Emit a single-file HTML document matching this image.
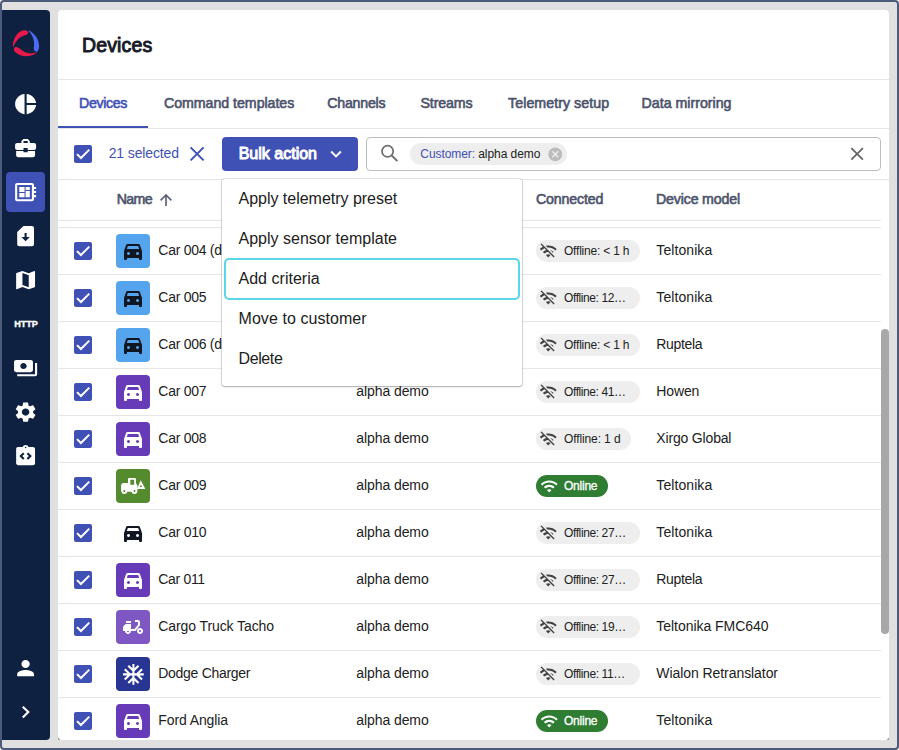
<!DOCTYPE html>
<html lang="en">
<head>
<meta charset="utf-8">
<title>Devices</title>
<style>
*{box-sizing:border-box;margin:0;padding:0}
html,body{width:899px;height:750px;overflow:hidden}
body{font-family:"Liberation Sans",sans-serif;background:#fff;position:relative;color:#212121}
.frame{position:absolute;left:0;top:0;width:899px;height:750px;border:2px solid #4c5b7b;border-radius:4px;background:#e0e0e0}
.side{position:absolute;left:2px;top:10px;width:48px;height:730px;background:#0f2140;border-radius:0 4px 4px 0}
.act{position:absolute;left:6px;top:172px;width:39px;height:40px;border-radius:4px;background:#3f51b5}
.http{position:absolute;left:2px;width:48px;text-align:center;top:319px;font-size:8.3px;font-weight:bold;color:#fff;letter-spacing:0;line-height:10px;transform:scaleX(1.09);-webkit-text-stroke:.35px #fff}
.main{position:absolute;left:58px;top:10px;width:831px;height:730px;background:#fff;border-radius:4px 4px 0 0}
.t{position:absolute;white-space:nowrap;line-height:20px}
.hl{position:absolute;height:1px;background:#e6e6e6}
.cb{position:absolute;width:18px;height:18px;border-radius:2px;background:#3f51b5}
.cb svg{position:absolute;left:0;top:0;width:18px;height:18px}
.btn{position:absolute;left:222px;top:137px;width:136px;height:34px;border-radius:4px;background:#3f51b5}
.search{position:absolute;left:366px;top:137px;width:515px;height:34px;border:1px solid #bdbdbd;border-radius:4px}
.chip{position:absolute;left:410px;top:143px;width:157px;height:22px;border-radius:11px;background:#eeeeee}
.ic{position:absolute;width:34px;height:34px;border-radius:4px}
.st{position:absolute;height:22px;border-radius:11px}
.sb{position:absolute;left:881px;top:329px;width:8px;height:305px;border-radius:4px;background:#a8a8a8}
.menu{position:absolute;left:222px;top:179px;width:300px;height:207px;background:#fff;border-radius:3px;box-shadow:0 0 0 1px rgba(0,0,0,.11),0 1px 2px rgba(0,0,0,.25);z-index:10}
.foc{position:absolute;left:224px;top:258px;width:296px;height:42px;border:2px solid #5ad5e8;border-radius:5px;z-index:11}
</style>
</head>
<body>
<div class="frame"></div>
<div class="side"></div><div class="act"></div>
<svg viewBox="0 0 789 750" style="position:absolute;left:6px;top:24px;width:40px;height:38px"><path d="M430 150C385 100 300 120 240 180C170 250 125 360 142 468C165 400 200 330 270 272C330 228 380 218 420 200C445 188 448 168 430 150Z" fill="#e8194b"/><path d="M435 120C520 160 600 240 630 320C660 400 662 470 632 522C615 552 585 552 565 530C545 505 545 480 552 440C568 340 530 220 435 120Z" fill="#4c6cf5"/><path d="M200 455C160 455 138 500 170 542C230 612 330 640 420 635C500 630 570 600 612 558C540 585 450 590 380 560C310 530 262 458 200 455Z" fill="#e8194b"/></svg>
<svg viewBox="0 0 24 24" preserveAspectRatio="none" style="position:absolute;left:13.40px;top:91.90px;width:25.2px;height:24.2px"><path d="M11 2v20c-5.07-.5-9-4.79-9-10s3.93-9.5 9-10zm2.03 0v8.990H22c-.47-4.740-4.240-8.520-8.970-8.990zm0 11.010V22c4.740-.47 8.500-4.250 8.970-8.990h-8.970z" fill="#fff"/></svg>
<svg viewBox="0 0 24 24" preserveAspectRatio="none" style="position:absolute;left:13.40px;top:135.90px;width:25.2px;height:24.2px"><path d="M10 16v-1H3.010L3 19c0 1.110.890 2 2 2h14c1.110 0 2-.89 2-2v-4h-7v1h-4zm10-9h-4.010V5l-2-2h-4l-2 2v2H4c-1.100 0-2 .9-2 2v3c0 1.110.890 2 2 2h6v-2h4v2h6c1.100 0 2-.9 2-2V9c0-1.100-.9-2-2-2zm-6 0h-4V5h4v2z" fill="#fff"/></svg>
<svg viewBox="0 0 24 24" preserveAspectRatio="none" style="position:absolute;left:13.40px;top:179.90px;width:25.2px;height:24.2px"><path d="M22 9V7h-2V5c0-1.100-.9-2-2-2H4c-1.100 0-2 .9-2 2v14c0 1.100.9 2 2 2h14c1.100 0 2-.9 2-2v-2h2v-2h-2v-2h2v-2h-2V9h2zm-4 10H4V5h14v14zM6 13h5v4H6zm6-6h4v3h-4zM6 7h5v5H6zm6 4h4v6h-4z" fill="#fff"/></svg>
<svg viewBox="0 0 24 24" preserveAspectRatio="none" style="position:absolute;left:13.40px;top:223.90px;width:25.2px;height:24.2px"><path d="M18 2h-8L4 8v12c0 1.100.9 2 2 2h12c1.100 0 2-.9 2-2V4c0-1.100-.9-2-2-2zm-6 15l-4-4h3V9.020L13 9v4h3l-4 4z" fill="#fff"/></svg>
<svg viewBox="0 0 24 24" preserveAspectRatio="none" style="position:absolute;left:13.40px;top:267.90px;width:25.2px;height:24.2px"><path d="M20.500 3l-.16.030L15 5.100 9 3 3.360 4.900c-.21.070-.36.250-.36.480V20.500c0 .280.220.5.5.5l.160-.030L9 18.900l6 2.100 5.640-1.900c.210-.07.360-.25.360-.48V3.500c0-.28-.22-.5-.5-.5zM15 19l-6-2.110V5l6 2.110V19z" fill="#fff"/></svg>
<svg viewBox="0 0 24 24" preserveAspectRatio="none" style="position:absolute;left:13.40px;top:355.90px;width:25.2px;height:24.2px"><path d="M19 14V6c0-1.100-.9-2-2-2H3c-1.100 0-2 .9-2 2v8c0 1.100.9 2 2 2h14c1.100 0 2-.9 2-2zm-9-1c-1.660 0-3-1.340-3-3s1.340-3 3-3 3 1.340 3 3-1.340 3-3 3zm13-6v11c0 1.100-.9 2-2 2H4v-2h17V7h2z" fill="#fff"/></svg>
<svg viewBox="0 0 24 24" preserveAspectRatio="none" style="position:absolute;left:13.40px;top:399.90px;width:25.2px;height:24.2px"><path d="M19.140 12.940c.040-.3.060-.61.060-.94 0-.32-.02-.64-.07-.94l2.030-1.580c.180-.14.230-.41.120-.61l-1.920-3.320c-.12-.22-.37-.29-.59-.22l-2.390.960c-.5-.38-1.030-.7-1.620-.94l-.36-2.540c-.04-.24-.24-.41-.48-.41h-3.840c-.24 0-.43.170-.47.410l-.36 2.540c-.59.240-1.130.570-1.620.940l-2.390-.96c-.22-.08-.47 0-.59.220L2.740 8.870c-.12.210-.08.470.120.610l2.030 1.580c-.05.300-.09.630-.09.940s.020.640.070.940l-2.030 1.580c-.18.140-.23.410-.12.610l1.920 3.320c.120.220.370.290.590.220l2.390-.96c.5.380 1.030.7 1.620.940l.360 2.540c.050.240.240.410.480.410h3.840c.240 0 .440-.17.470-.41l.360-2.540c.590-.24 1.130-.56 1.620-.94l2.390.960c.220.080.470 0 .590-.22l1.920-3.320c.120-.22.070-.47-.12-.61l-2.010-1.580zM12 15.600c-1.980 0-3.600-1.620-3.600-3.600s1.620-3.600 3.600-3.600 3.600 1.620 3.600 3.600-1.620 3.600-3.600 3.600z" fill="#fff"/></svg>
<svg viewBox="0 0 24 24" preserveAspectRatio="none" style="position:absolute;left:13.40px;top:443.90px;width:25.2px;height:24.2px"><path d="M19 3h-4.180C14.400 1.840 13.300 1 12 1s-2.400.840-2.820 2H5c-.14 0-.27.010-.4.040-.39.080-.74.280-1.010.55-.18.180-.33.400-.43.640-.1.230-.16.490-.16.770v14c0 .270.060.540.160.780s.250.450.430.640c.270.270.620.470 1.010.550.130.020.260.030.400.030h14c1.100 0 2-.9 2-2V5c0-1.100-.9-2-2-2zm-8 11.170l-1.410 1.420L6 12l3.590-3.590L11 9.830 8.830 12 11 14.170zm1-9.920c-.41 0-.75-.34-.75-.75s.340-.75.750-.75.750.340.750.750-.34.750-.75.750zm2.410 11.340L13 14.170 15.170 12 13 9.830l1.410-1.420L18 12l-3.590 3.590z" fill="#fff"/></svg>
<svg viewBox="0 0 24 24" preserveAspectRatio="none" style="position:absolute;left:13.40px;top:655.90px;width:25.2px;height:24.2px"><path d="M12 12c2.210 0 4-1.790 4-4s-1.790-4-4-4-4 1.790-4 4 1.790 4 4 4zm0 2c-2.670 0-8 1.340-8 4v2h16v-2c0-2.660-5.330-4-8-4z" fill="#fff"/></svg>
<svg viewBox="0 0 24 24" preserveAspectRatio="none" style="position:absolute;left:13.40px;top:699.90px;width:25.2px;height:24.2px"><path d="M10 6L8.590 7.410 13.170 12l-4.580 4.590L10 18l6-6z" fill="#fff"/></svg>
<div class="http" id="http">HTTP</div>
<div class="main"></div>
<div class="t" id="title" style="left:82px;top:35.01px;font-size:19.5px;-webkit-text-stroke:0.95px #181b27;color:#181b27;letter-spacing:0.145px;">Devices</div>
<div class="hl" style="left:58px;top:79px;width:831px"></div>
<div class="t" id="tab0" style="left:79px;top:93.00px;font-size:14.2px;-webkit-text-stroke:0.6px #3f51b5;color:#3f51b5;letter-spacing:-0.334px;">Devices</div>
<div class="t" id="tab1" style="left:164px;top:93.00px;font-size:14.2px;-webkit-text-stroke:0.6px #4c536c;color:#4c536c;letter-spacing:-0.037px;">Command templates</div>
<div class="t" id="tab2" style="left:327.2px;top:93.00px;font-size:14.2px;-webkit-text-stroke:0.6px #4c536c;color:#4c536c;letter-spacing:-0.220px;">Channels</div>
<div class="t" id="tab3" style="left:420.5px;top:93.00px;font-size:14.2px;-webkit-text-stroke:0.6px #4c536c;color:#4c536c;letter-spacing:-0.127px;">Streams</div>
<div class="t" id="tab4" style="left:508.1px;top:93.00px;font-size:14.2px;-webkit-text-stroke:0.6px #4c536c;color:#4c536c;letter-spacing:0.058px;">Telemetry setup</div>
<div class="t" id="tab5" style="left:641.6px;top:93.00px;font-size:14.2px;-webkit-text-stroke:0.6px #4c536c;color:#4c536c;letter-spacing:0.001px;">Data mirroring</div>
<div class="hl" style="left:58px;top:128px;width:831px"></div>
<div style="position:absolute;left:58px;top:126px;width:90px;height:2px;background:#3f51b5"></div>
<div class="cb" style="left:74px;top:145px"><svg viewBox="0 0 18 18"><path d="M3 9.100L6.950 13.050L15.300 4.650" fill="none" stroke="#fff" stroke-width="2"/></svg></div>
<div class="t" id="sel" style="left:108.7px;top:143.01px;font-size:14px;color:#3f51b5;letter-spacing:-0.125px;">21 selected</div>
<svg viewBox="185 141 24 24" style="position:absolute;left:185px;top:141px;width:24px;height:24px"><path d="M190.6 147.4L203.6 160.4M203.6 147.4L190.6 160.4" stroke="#3f51b5" stroke-width="2.0" fill="none"/></svg>
<div class="btn"></div>
<div class="t" id="bulk" style="left:238.7px;top:144.00px;font-size:16px;-webkit-text-stroke:0.95px #fff;color:#fff;letter-spacing:0.003px;">Bulk action</div>
<svg viewBox="0 0 24 24" style="position:absolute;left:325.20px;top:143.00px;width:22px;height:22px;"><path d="M16.590 8.590L12 13.170 7.410 8.590 6 10l6 6 6-6z" fill="#fff" fill-rule="evenodd"/></svg>
<div class="search"></div>
<svg viewBox="378 142 24 24" style="position:absolute;left:378px;top:142px;width:24px;height:24px"><circle cx="387.6" cy="151.3" r="5.6" stroke="#6e6e6e" stroke-width="1.7" fill="none"/><path d="M391.7 155.5L397.4 161.1" stroke="#6e6e6e" stroke-width="1.9" fill="none"/></svg>
<div class="chip"></div>
<div class="t" id="chipt" style="left:420.3px;top:144.01px;font-size:12px;color:#212121;letter-spacing:-0.072px;"><span style="color:#3f51b5">Customer:</span> alpha demo</div>
<svg viewBox="0 0 24 24" style="position:absolute;left:546.60px;top:145.60px;width:16.6px;height:16.6px;"><path d="M12 2C6.470 2 2 6.470 2 12s4.470 10 10 10 10-4.470 10-10S17.530 2 12 2zm5 13.590L15.590 17 12 13.410 8.410 17 7 15.590 10.590 12 7 8.410 8.410 7 12 10.590 15.590 7 17 8.410 13.410 12 17 15.590z" fill="#bcbcbc" fill-rule="evenodd"/></svg>
<svg viewBox="845 141 24 24" style="position:absolute;left:845px;top:141px;width:24px;height:24px"><path d="M851.3000000000001 148.1L862.9 159.70000000000002M862.9 148.1L851.3000000000001 159.70000000000002" stroke="#666" stroke-width="1.8" fill="none"/></svg>
<div class="hl" style="left:58px;top:179px;width:831px"></div>
<div class="t" id="thn" style="left:116.7px;top:189.00px;font-size:14.2px;-webkit-text-stroke:0.6px #4c536c;color:#4c536c;letter-spacing:-0.646px;">Name</div>
<svg viewBox="154 188 24 24" style="position:absolute;left:154px;top:188px;width:24px;height:24px"><path d="M166 206V195.200M160.600 200.400L166 195L171.400 200.400" stroke="#5f6377" stroke-width="1.7" fill="none"/></svg>
<div class="t" id="thc" style="left:536px;top:189.00px;font-size:14.2px;-webkit-text-stroke:0.6px #4c536c;color:#4c536c;letter-spacing:-0.156px;">Connected</div>
<div class="t" id="thd" style="left:656px;top:189.00px;font-size:14.2px;-webkit-text-stroke:0.6px #4c536c;color:#4c536c;letter-spacing:-0.170px;">Device model</div>
<div class="hl" style="left:58px;top:220px;width:823px"></div>
<div class="hl" style="left:58px;top:227px;width:823px"></div>
<div class="hl" style="left:58px;top:274px;width:823px"></div>
<div class="cb" style="left:74px;top:242px"><svg viewBox="0 0 18 18"><path d="M3 9.100L6.950 13.050L15.300 4.650" fill="none" stroke="#fff" stroke-width="2"/></svg></div>
<div class="ic" style="left:116px;top:234px;background:#55a4ee"></div>
<svg viewBox="0 0 24 24" style="position:absolute;left:121.10px;top:238.80px;width:24px;height:24px;"><path d="M6 19v1a1 1 0 0 1-1 1H4a1 1 0 0 1-1-1v-8l2.100-6Q5.450 5 6.500 5h11q1.050 0 1.400 1L21 12v8a1 1 0 0 1-1 1h-1a1 1 0 0 1-1-1v-1zM5.800 10h12.400l-1.050-3H6.850zM7.500 13a1.500 1.500 0 1 0 .001 0zM16.500 13a1.500 1.500 0 1 0 .001 0z" fill="#101722" fill-rule="evenodd"/></svg>
<div class="t" id="nm0" style="left:158.3px;top:240.01px;font-size:14px;color:#212121;letter-spacing:-0.279px;">Car 004 (demo)</div>
<div class="t" id="cu0" style="left:356.3px;top:240.01px;font-size:14px;color:#212121;letter-spacing:-0.081px;">alpha demo</div>
<div class="st" style="left:536px;top:240px;width:104px;background:#eeeeee"></div>
<svg viewBox="0 0 24 24" style="position:absolute;left:539.35px;top:241.75px;width:18.5px;height:18.5px;"><path d="M22.990 9C19.150 5.160 13.800 3.760 8.840 4.780l2.520 2.520c3.470-.17 6.990 1.050 9.630 3.700l2-2zm-4 4c-1.290-1.290-2.840-2.130-4.490-2.560l3.530 3.530.960-.97zM2 3.050L5.070 6.100C3.600 6.820 2.220 7.780 1 9l1.990 2c1.240-1.240 2.670-2.160 4.200-2.770l2.240 2.240C7.810 10.890 6.270 11.730 5 13v.010L6.990 15c1.360-1.360 3.140-2.040 4.920-2.060L18.980 20l1.270-1.260L3.290 1.790 2 3.050zM9 17l3 3 3-3c-1.650-1.660-4.340-1.660-6 0z" fill="#424242" fill-rule="evenodd"/></svg>
<div class="t" id="st0" style="left:564px;top:241.01px;font-size:12px;color:#212121;letter-spacing:-0.212px;">Offline: &lt; 1 h</div>
<div class="t" id="dm0" style="left:656.3px;top:240.01px;font-size:14px;color:#212121;letter-spacing:0.086px;">Teltonika</div>
<div class="hl" style="left:58px;top:321px;width:823px"></div>
<div class="cb" style="left:74px;top:289px"><svg viewBox="0 0 18 18"><path d="M3 9.100L6.950 13.050L15.300 4.650" fill="none" stroke="#fff" stroke-width="2"/></svg></div>
<div class="ic" style="left:116px;top:281px;background:#55a4ee"></div>
<svg viewBox="0 0 24 24" style="position:absolute;left:121.10px;top:285.80px;width:24px;height:24px;"><path d="M6 19v1a1 1 0 0 1-1 1H4a1 1 0 0 1-1-1v-8l2.100-6Q5.450 5 6.500 5h11q1.050 0 1.400 1L21 12v8a1 1 0 0 1-1 1h-1a1 1 0 0 1-1-1v-1zM5.800 10h12.400l-1.050-3H6.850zM7.500 13a1.500 1.500 0 1 0 .001 0zM16.500 13a1.500 1.500 0 1 0 .001 0z" fill="#101722" fill-rule="evenodd"/></svg>
<div class="t" id="nm1" style="left:158.3px;top:287.01px;font-size:14px;color:#212121;letter-spacing:-0.279px;">Car 005</div>
<div class="t" id="cu1" style="left:356.3px;top:287.01px;font-size:14px;color:#212121;letter-spacing:-0.081px;">alpha demo</div>
<div class="st" style="left:536px;top:287px;width:104px;background:#eeeeee"></div>
<svg viewBox="0 0 24 24" style="position:absolute;left:539.35px;top:288.75px;width:18.5px;height:18.5px;"><path d="M22.990 9C19.150 5.160 13.800 3.760 8.840 4.780l2.520 2.520c3.470-.17 6.990 1.050 9.630 3.700l2-2zm-4 4c-1.290-1.290-2.840-2.130-4.490-2.560l3.530 3.530.960-.97zM2 3.050L5.070 6.100C3.600 6.820 2.220 7.780 1 9l1.990 2c1.240-1.240 2.670-2.160 4.200-2.770l2.240 2.240C7.810 10.890 6.270 11.730 5 13v.010L6.990 15c1.360-1.360 3.140-2.040 4.920-2.060L18.980 20l1.270-1.260L3.290 1.790 2 3.050zM9 17l3 3 3-3c-1.650-1.660-4.340-1.660-6 0z" fill="#424242" fill-rule="evenodd"/></svg>
<div class="t" id="st1" style="left:564px;top:288.01px;font-size:12px;color:#212121;letter-spacing:-0.407px;">Offline: 12…</div>
<div class="t" id="dm1" style="left:656.3px;top:287.01px;font-size:14px;color:#212121;letter-spacing:0.086px;">Teltonika</div>
<div class="hl" style="left:58px;top:368px;width:823px"></div>
<div class="cb" style="left:74px;top:336px"><svg viewBox="0 0 18 18"><path d="M3 9.100L6.950 13.050L15.300 4.650" fill="none" stroke="#fff" stroke-width="2"/></svg></div>
<div class="ic" style="left:116px;top:328px;background:#55a4ee"></div>
<svg viewBox="0 0 24 24" style="position:absolute;left:121.10px;top:332.80px;width:24px;height:24px;"><path d="M6 19v1a1 1 0 0 1-1 1H4a1 1 0 0 1-1-1v-8l2.100-6Q5.450 5 6.500 5h11q1.050 0 1.400 1L21 12v8a1 1 0 0 1-1 1h-1a1 1 0 0 1-1-1v-1zM5.800 10h12.400l-1.050-3H6.850zM7.500 13a1.500 1.500 0 1 0 .001 0zM16.500 13a1.500 1.500 0 1 0 .001 0z" fill="#101722" fill-rule="evenodd"/></svg>
<div class="t" id="nm2" style="left:158.3px;top:334.01px;font-size:14px;color:#212121;letter-spacing:-0.279px;">Car 006 (demo)</div>
<div class="t" id="cu2" style="left:356.3px;top:334.01px;font-size:14px;color:#212121;letter-spacing:-0.081px;">alpha demo</div>
<div class="st" style="left:536px;top:334px;width:104px;background:#eeeeee"></div>
<svg viewBox="0 0 24 24" style="position:absolute;left:539.35px;top:335.75px;width:18.5px;height:18.5px;"><path d="M22.990 9C19.150 5.160 13.800 3.760 8.840 4.780l2.520 2.520c3.470-.17 6.990 1.050 9.630 3.700l2-2zm-4 4c-1.290-1.290-2.840-2.130-4.490-2.560l3.530 3.530.960-.97zM2 3.050L5.070 6.100C3.600 6.820 2.220 7.780 1 9l1.990 2c1.240-1.240 2.670-2.160 4.200-2.770l2.240 2.240C7.810 10.890 6.270 11.730 5 13v.010L6.990 15c1.360-1.360 3.140-2.040 4.920-2.060L18.980 20l1.270-1.260L3.290 1.790 2 3.050zM9 17l3 3 3-3c-1.650-1.660-4.340-1.660-6 0z" fill="#424242" fill-rule="evenodd"/></svg>
<div class="t" id="st2" style="left:564px;top:335.01px;font-size:12px;color:#212121;letter-spacing:-0.212px;">Offline: &lt; 1 h</div>
<div class="t" id="dm2" style="left:656.3px;top:334.01px;font-size:14px;color:#212121;letter-spacing:-0.349px;">Ruptela</div>
<div class="hl" style="left:58px;top:415px;width:823px"></div>
<div class="cb" style="left:74px;top:383px"><svg viewBox="0 0 18 18"><path d="M3 9.100L6.950 13.050L15.300 4.650" fill="none" stroke="#fff" stroke-width="2"/></svg></div>
<div class="ic" style="left:116px;top:375px;background:#673ab7"></div>
<svg viewBox="0 0 24 24" style="position:absolute;left:121.10px;top:379.80px;width:24px;height:24px;"><path d="M6 19v1a1 1 0 0 1-1 1H4a1 1 0 0 1-1-1v-8l2.100-6Q5.450 5 6.500 5h11q1.050 0 1.400 1L21 12v8a1 1 0 0 1-1 1h-1a1 1 0 0 1-1-1v-1zM5.800 10h12.400l-1.050-3H6.850zM7.500 13a1.500 1.500 0 1 0 .001 0zM16.500 13a1.500 1.500 0 1 0 .001 0z" fill="#fff" fill-rule="evenodd"/></svg>
<div class="t" id="nm3" style="left:158.3px;top:381.01px;font-size:14px;color:#212121;letter-spacing:-0.279px;">Car 007</div>
<div class="t" id="cu3" style="left:356.3px;top:381.01px;font-size:14px;color:#212121;letter-spacing:-0.081px;">alpha demo</div>
<div class="st" style="left:536px;top:381px;width:104px;background:#eeeeee"></div>
<svg viewBox="0 0 24 24" style="position:absolute;left:539.35px;top:382.75px;width:18.5px;height:18.5px;"><path d="M22.990 9C19.150 5.160 13.800 3.760 8.840 4.780l2.520 2.520c3.470-.17 6.990 1.050 9.630 3.700l2-2zm-4 4c-1.290-1.290-2.840-2.130-4.490-2.560l3.530 3.530.960-.97zM2 3.050L5.070 6.100C3.600 6.820 2.220 7.780 1 9l1.990 2c1.240-1.240 2.670-2.160 4.200-2.770l2.240 2.240C7.810 10.890 6.270 11.730 5 13v.010L6.990 15c1.360-1.360 3.140-2.040 4.920-2.060L18.980 20l1.270-1.260L3.290 1.790 2 3.050zM9 17l3 3 3-3c-1.650-1.660-4.340-1.660-6 0z" fill="#424242" fill-rule="evenodd"/></svg>
<div class="t" id="st3" style="left:564px;top:382.01px;font-size:12px;color:#212121;letter-spacing:-0.407px;">Offline: 41…</div>
<div class="t" id="dm3" style="left:656.3px;top:381.01px;font-size:14px;color:#212121;letter-spacing:-0.132px;">Howen</div>
<div class="hl" style="left:58px;top:462px;width:823px"></div>
<div class="cb" style="left:74px;top:430px"><svg viewBox="0 0 18 18"><path d="M3 9.100L6.950 13.050L15.300 4.650" fill="none" stroke="#fff" stroke-width="2"/></svg></div>
<div class="ic" style="left:116px;top:422px;background:#673ab7"></div>
<svg viewBox="0 0 24 24" style="position:absolute;left:121.10px;top:426.80px;width:24px;height:24px;"><path d="M6 19v1a1 1 0 0 1-1 1H4a1 1 0 0 1-1-1v-8l2.100-6Q5.450 5 6.500 5h11q1.050 0 1.400 1L21 12v8a1 1 0 0 1-1 1h-1a1 1 0 0 1-1-1v-1zM5.800 10h12.400l-1.050-3H6.850zM7.500 13a1.500 1.500 0 1 0 .001 0zM16.500 13a1.500 1.500 0 1 0 .001 0z" fill="#fff" fill-rule="evenodd"/></svg>
<div class="t" id="nm4" style="left:158.3px;top:428.01px;font-size:14px;color:#212121;letter-spacing:-0.279px;">Car 008</div>
<div class="t" id="cu4" style="left:356.3px;top:428.01px;font-size:14px;color:#212121;letter-spacing:-0.081px;">alpha demo</div>
<div class="st" style="left:536px;top:428px;width:95px;background:#eeeeee"></div>
<svg viewBox="0 0 24 24" style="position:absolute;left:539.35px;top:429.75px;width:18.5px;height:18.5px;"><path d="M22.990 9C19.150 5.160 13.800 3.760 8.840 4.780l2.520 2.520c3.470-.17 6.990 1.050 9.630 3.700l2-2zm-4 4c-1.290-1.290-2.840-2.130-4.490-2.560l3.530 3.530.960-.97zM2 3.050L5.070 6.100C3.600 6.820 2.220 7.780 1 9l1.990 2c1.240-1.240 2.670-2.160 4.200-2.770l2.240 2.240C7.810 10.890 6.270 11.730 5 13v.010L6.990 15c1.360-1.360 3.140-2.040 4.920-2.060L18.980 20l1.270-1.260L3.290 1.790 2 3.050zM9 17l3 3 3-3c-1.650-1.660-4.340-1.660-6 0z" fill="#424242" fill-rule="evenodd"/></svg>
<div class="t" id="st4" style="left:564px;top:429.01px;font-size:12px;color:#212121;letter-spacing:-0.115px;">Offline: 1 d</div>
<div class="t" id="dm4" style="left:656.3px;top:428.01px;font-size:14px;color:#212121;letter-spacing:-0.169px;">Xirgo Global</div>
<div class="hl" style="left:58px;top:509px;width:823px"></div>
<div class="cb" style="left:74px;top:477px"><svg viewBox="0 0 18 18"><path d="M3 9.100L6.950 13.050L15.300 4.650" fill="none" stroke="#fff" stroke-width="2"/></svg></div>
<div class="ic" style="left:116px;top:469px;background:#558b2f"></div>
<svg viewBox="0 0 34 34" style="position:absolute;left:116px;top:469px;width:34px;height:34px"><path fill="#fff" fill-rule="evenodd" d="M13.3 9h5.400q1.300 0 1.300 1.300v3.900l1.400 2.200v5.600a3 3 0 0 1-5.900.8h-4.200a3 3 0 0 1-5.900-.8h-.4v-5q0-3 3-3h4v-3.700q0-1.300 1.300-1.300zM14.300 10.800v5h3.900v-5zM8.300 21.100a.9.900 0 1 0 .001 0zM18.500 21.100a.9.900 0 1 0 .001 0zM24.700 11.200l4.700 8.700h-8.400zM24.9 15.7l-1.2 2.4h2.4z"/></svg>
<div class="t" id="nm5" style="left:158.3px;top:475.01px;font-size:14px;color:#212121;letter-spacing:-0.279px;">Car 009</div>
<div class="t" id="cu5" style="left:356.3px;top:475.01px;font-size:14px;color:#212121;letter-spacing:-0.081px;">alpha demo</div>
<div class="st" style="left:536px;top:475px;width:72px;background:#2e7d32"></div>
<svg viewBox="0 0 24 24" style="position:absolute;left:539.75px;top:476.75px;width:18.5px;height:18.5px;"><path d="M1 9l2 2c4.970-4.970 13.030-4.970 18 0l2-2C16.930 2.930 7.080 2.930 1 9zm8 8l3 3 3-3c-1.650-1.660-4.340-1.660-6 0zm-4-4l2 2c2.760-2.760 7.240-2.760 10 0l2-2C15.140 9.140 8.870 9.140 5 13z" fill="#fff" fill-rule="evenodd"/></svg>
<div class="t" id="st5" style="left:564px;top:476.01px;font-size:12px;-webkit-text-stroke:0.3px #fff;color:#fff;letter-spacing:-0.234px;">Online</div>
<div class="t" id="dm5" style="left:656.3px;top:475.01px;font-size:14px;color:#212121;letter-spacing:0.086px;">Teltonika</div>
<div class="hl" style="left:58px;top:556px;width:823px"></div>
<div class="cb" style="left:74px;top:524px"><svg viewBox="0 0 18 18"><path d="M3 9.100L6.950 13.050L15.300 4.650" fill="none" stroke="#fff" stroke-width="2"/></svg></div>
<div class="ic" style="left:116px;top:516px;background:#fff"></div>
<svg viewBox="0 0 24 24" style="position:absolute;left:121.10px;top:520.80px;width:24px;height:24px;"><path d="M6 19v1a1 1 0 0 1-1 1H4a1 1 0 0 1-1-1v-8l2.100-6Q5.450 5 6.500 5h11q1.050 0 1.400 1L21 12v8a1 1 0 0 1-1 1h-1a1 1 0 0 1-1-1v-1zM5.800 10h12.400l-1.050-3H6.850zM7.500 13a1.500 1.500 0 1 0 .001 0zM16.500 13a1.500 1.500 0 1 0 .001 0z" fill="#101722" fill-rule="evenodd"/></svg>
<div class="t" id="nm6" style="left:158.3px;top:522.01px;font-size:14px;color:#212121;letter-spacing:-0.279px;">Car 010</div>
<div class="t" id="cu6" style="left:356.3px;top:522.01px;font-size:14px;color:#212121;letter-spacing:-0.081px;">alpha demo</div>
<div class="st" style="left:536px;top:522px;width:104px;background:#eeeeee"></div>
<svg viewBox="0 0 24 24" style="position:absolute;left:539.35px;top:523.75px;width:18.5px;height:18.5px;"><path d="M22.990 9C19.150 5.160 13.800 3.760 8.840 4.780l2.520 2.520c3.470-.17 6.990 1.050 9.630 3.700l2-2zm-4 4c-1.290-1.290-2.840-2.130-4.490-2.560l3.530 3.530.960-.97zM2 3.050L5.070 6.100C3.600 6.820 2.220 7.780 1 9l1.990 2c1.240-1.240 2.670-2.160 4.200-2.770l2.240 2.240C7.810 10.890 6.270 11.730 5 13v.010L6.990 15c1.360-1.360 3.140-2.040 4.920-2.060L18.980 20l1.270-1.260L3.290 1.790 2 3.050zM9 17l3 3 3-3c-1.650-1.660-4.340-1.660-6 0z" fill="#424242" fill-rule="evenodd"/></svg>
<div class="t" id="st6" style="left:564px;top:523.01px;font-size:12px;color:#212121;letter-spacing:-0.390px;">Offline: 27…</div>
<div class="t" id="dm6" style="left:656.3px;top:522.01px;font-size:14px;color:#212121;letter-spacing:0.086px;">Teltonika</div>
<div class="hl" style="left:58px;top:603px;width:823px"></div>
<div class="cb" style="left:74px;top:571px"><svg viewBox="0 0 18 18"><path d="M3 9.100L6.950 13.050L15.300 4.650" fill="none" stroke="#fff" stroke-width="2"/></svg></div>
<div class="ic" style="left:116px;top:563px;background:#673ab7"></div>
<svg viewBox="0 0 24 24" style="position:absolute;left:121.10px;top:567.80px;width:24px;height:24px;"><path d="M6 19v1a1 1 0 0 1-1 1H4a1 1 0 0 1-1-1v-8l2.100-6Q5.450 5 6.500 5h11q1.050 0 1.400 1L21 12v8a1 1 0 0 1-1 1h-1a1 1 0 0 1-1-1v-1zM5.800 10h12.400l-1.050-3H6.850zM7.500 13a1.500 1.500 0 1 0 .001 0zM16.500 13a1.500 1.500 0 1 0 .001 0z" fill="#fff" fill-rule="evenodd"/></svg>
<div class="t" id="nm7" style="left:158.3px;top:569.01px;font-size:14px;color:#212121;letter-spacing:-0.320px;">Car 011</div>
<div class="t" id="cu7" style="left:356.3px;top:569.01px;font-size:14px;color:#212121;letter-spacing:-0.081px;">alpha demo</div>
<div class="st" style="left:536px;top:569px;width:104px;background:#eeeeee"></div>
<svg viewBox="0 0 24 24" style="position:absolute;left:539.35px;top:570.75px;width:18.5px;height:18.5px;"><path d="M22.990 9C19.150 5.160 13.800 3.760 8.840 4.780l2.520 2.520c3.470-.17 6.990 1.050 9.630 3.700l2-2zm-4 4c-1.290-1.290-2.840-2.130-4.490-2.560l3.530 3.530.960-.97zM2 3.050L5.070 6.100C3.600 6.820 2.220 7.780 1 9l1.990 2c1.240-1.240 2.670-2.160 4.200-2.770l2.240 2.240C7.810 10.890 6.270 11.730 5 13v.010L6.990 15c1.360-1.360 3.140-2.040 4.920-2.060L18.980 20l1.270-1.260L3.290 1.790 2 3.050zM9 17l3 3 3-3c-1.650-1.660-4.340-1.660-6 0z" fill="#424242" fill-rule="evenodd"/></svg>
<div class="t" id="st7" style="left:564px;top:570.01px;font-size:12px;color:#212121;letter-spacing:-0.390px;">Offline: 27…</div>
<div class="t" id="dm7" style="left:656.3px;top:569.01px;font-size:14px;color:#212121;letter-spacing:-0.349px;">Ruptela</div>
<div class="hl" style="left:58px;top:650px;width:823px"></div>
<div class="cb" style="left:74px;top:618px"><svg viewBox="0 0 18 18"><path d="M3 9.100L6.950 13.050L15.300 4.650" fill="none" stroke="#fff" stroke-width="2"/></svg></div>
<div class="ic" style="left:116px;top:610px;background:#7e57c2"></div>
<svg viewBox="0 0 24 24" style="position:absolute;left:121.10px;top:614.80px;width:24px;height:24px;"><path d="M19 7c0-1.100-.9-2-2-2h-3v2h3v2.650L13.520 14H10V9H6c-2.210 0-4 1.790-4 4v3h2c0 1.660 1.340 3 3 3s3-1.340 3-3h4.480L19 10.350V7zM7 17c-.55 0-1-.45-1-1h2c0 .550-.45 1-1 1zM5 6h5v2H5zM19 13c-1.660 0-3 1.340-3 3s1.340 3 3 3 3-1.340 3-3-1.340-3-3-3zm0 4c-.55 0-1-.45-1-1s.450-1 1-1 1 .450 1 1-.45 1-1 1z" fill="#fff" fill-rule="evenodd"/></svg>
<div class="t" id="nm8" style="left:158.3px;top:616.01px;font-size:14px;color:#212121;letter-spacing:-0.094px;">Cargo Truck Tacho</div>
<div class="t" id="cu8" style="left:356.3px;top:616.01px;font-size:14px;color:#212121;letter-spacing:-0.081px;">alpha demo</div>
<div class="st" style="left:536px;top:616px;width:104px;background:#eeeeee"></div>
<svg viewBox="0 0 24 24" style="position:absolute;left:539.35px;top:617.75px;width:18.5px;height:18.5px;"><path d="M22.990 9C19.150 5.160 13.800 3.760 8.840 4.780l2.520 2.520c3.470-.17 6.990 1.050 9.630 3.700l2-2zm-4 4c-1.290-1.290-2.840-2.130-4.490-2.560l3.530 3.530.960-.97zM2 3.050L5.070 6.100C3.600 6.820 2.220 7.780 1 9l1.990 2c1.240-1.240 2.670-2.160 4.200-2.770l2.240 2.240C7.810 10.890 6.270 11.730 5 13v.010L6.990 15c1.360-1.360 3.140-2.040 4.920-2.060L18.980 20l1.270-1.260L3.290 1.790 2 3.050zM9 17l3 3 3-3c-1.650-1.660-4.340-1.660-6 0z" fill="#424242" fill-rule="evenodd"/></svg>
<div class="t" id="st8" style="left:564px;top:617.01px;font-size:12px;color:#212121;letter-spacing:-0.390px;">Offline: 19…</div>
<div class="t" id="dm8" style="left:656.3px;top:616.01px;font-size:14px;color:#212121;letter-spacing:-0.034px;">Teltonika FMC640</div>
<div class="hl" style="left:58px;top:697px;width:823px"></div>
<div class="cb" style="left:74px;top:665px"><svg viewBox="0 0 18 18"><path d="M3 9.100L6.950 13.050L15.300 4.650" fill="none" stroke="#fff" stroke-width="2"/></svg></div>
<div class="ic" style="left:116px;top:657px;background:#283593"></div>
<svg viewBox="0 0 24 24" style="position:absolute;left:120.70px;top:661.60px;width:24.8px;height:24.8px;"><path d="M22 11h-4.170l3.240-3.240-1.410-1.420L15 11h-2V9l4.660-4.660-1.420-1.410L13 6.170V2h-2v4.170L7.760 2.930 6.340 4.340 11 9v2H9L4.340 6.340 2.930 7.760 6.170 11H2v2h4.170l-3.240 3.240 1.410 1.420L9 13h2v2l-4.660 4.660 1.420 1.410L11 17.830V22h2v-4.170l3.240 3.240 1.420-1.410L13 15v-2h2l4.660 4.660 1.410-1.420L17.830 13H22z" fill="#fff" fill-rule="evenodd"/></svg>
<div class="t" id="nm9" style="left:158.3px;top:663.01px;font-size:14px;color:#212121;letter-spacing:-0.299px;">Dodge Charger</div>
<div class="t" id="cu9" style="left:356.3px;top:663.01px;font-size:14px;color:#212121;letter-spacing:-0.081px;">alpha demo</div>
<div class="st" style="left:536px;top:663px;width:104px;background:#eeeeee"></div>
<svg viewBox="0 0 24 24" style="position:absolute;left:539.35px;top:664.75px;width:18.5px;height:18.5px;"><path d="M22.990 9C19.150 5.160 13.800 3.760 8.840 4.780l2.520 2.520c3.470-.17 6.990 1.050 9.630 3.700l2-2zm-4 4c-1.290-1.290-2.840-2.130-4.490-2.560l3.530 3.530.960-.97zM2 3.050L5.070 6.100C3.600 6.820 2.220 7.780 1 9l1.990 2c1.240-1.240 2.670-2.160 4.200-2.770l2.240 2.240C7.810 10.890 6.270 11.730 5 13v.010L6.990 15c1.360-1.360 3.140-2.040 4.920-2.060L18.980 20l1.270-1.260L3.290 1.790 2 3.050zM9 17l3 3 3-3c-1.650-1.660-4.340-1.660-6 0z" fill="#424242" fill-rule="evenodd"/></svg>
<div class="t" id="st9" style="left:564px;top:664.01px;font-size:12px;color:#212121;letter-spacing:-0.399px;">Offline: 11…</div>
<div class="t" id="dm9" style="left:656.3px;top:663.01px;font-size:14px;color:#212121;letter-spacing:-0.067px;">Wialon Retranslator</div>
<div class="cb" style="left:74px;top:712px"><svg viewBox="0 0 18 18"><path d="M3 9.100L6.950 13.050L15.300 4.650" fill="none" stroke="#fff" stroke-width="2"/></svg></div>
<div class="ic" style="left:116px;top:704px;background:#673ab7"></div>
<svg viewBox="0 0 24 24" style="position:absolute;left:121.10px;top:708.80px;width:24px;height:24px;"><path d="M6 19v1a1 1 0 0 1-1 1H4a1 1 0 0 1-1-1v-8l2.100-6Q5.450 5 6.500 5h11q1.050 0 1.400 1L21 12v8a1 1 0 0 1-1 1h-1a1 1 0 0 1-1-1v-1zM5.800 10h12.400l-1.050-3H6.850zM7.500 13a1.500 1.500 0 1 0 .001 0zM16.500 13a1.500 1.500 0 1 0 .001 0z" fill="#fff" fill-rule="evenodd"/></svg>
<div class="t" id="nm10" style="left:158.3px;top:710.01px;font-size:14px;color:#212121;letter-spacing:-0.107px;">Ford Anglia</div>
<div class="t" id="cu10" style="left:356.3px;top:710.01px;font-size:14px;color:#212121;letter-spacing:-0.081px;">alpha demo</div>
<div class="st" style="left:536px;top:710px;width:72px;background:#2e7d32"></div>
<svg viewBox="0 0 24 24" style="position:absolute;left:539.75px;top:711.75px;width:18.5px;height:18.5px;"><path d="M1 9l2 2c4.970-4.970 13.030-4.970 18 0l2-2C16.930 2.930 7.080 2.930 1 9zm8 8l3 3 3-3c-1.650-1.660-4.340-1.660-6 0zm-4-4l2 2c2.760-2.760 7.240-2.760 10 0l2-2C15.140 9.140 8.870 9.140 5 13z" fill="#fff" fill-rule="evenodd"/></svg>
<div class="t" id="st10" style="left:564px;top:711.01px;font-size:12px;-webkit-text-stroke:0.3px #fff;color:#fff;letter-spacing:-0.234px;">Online</div>
<div class="t" id="dm10" style="left:656.3px;top:710.01px;font-size:14px;color:#212121;letter-spacing:0.086px;">Teltonika</div>
<div class="sb"></div>
<svg viewBox="0 0 831 3" style="position:absolute;left:58px;top:737px;width:831px;height:3px"><path d="M0 .6L2.400 3H0zM831 .6L828.600 3H831z" fill="#9a9a9a"/></svg>
<div class="menu"></div><div class="foc"></div>
<div class="t" id="mi0" style="left:238.5px;top:189.00px;font-size:16px;color:#212121;letter-spacing:-0.018px;z-index:11;">Apply telemetry preset</div>
<div class="t" id="mi1" style="left:238.5px;top:229.00px;font-size:16px;color:#212121;letter-spacing:0.009px;z-index:11;">Apply sensor template</div>
<div class="t" id="mi2" style="left:238.5px;top:269.00px;font-size:16px;color:#212121;letter-spacing:0.024px;z-index:11;">Add criteria</div>
<div class="t" id="mi3" style="left:238.5px;top:309.00px;font-size:16px;color:#212121;letter-spacing:0.067px;z-index:11;">Move to customer</div>
<div class="t" id="mi4" style="left:238.5px;top:349.00px;font-size:16px;color:#212121;letter-spacing:-0.391px;z-index:11;">Delete</div>
</body>
</html>
